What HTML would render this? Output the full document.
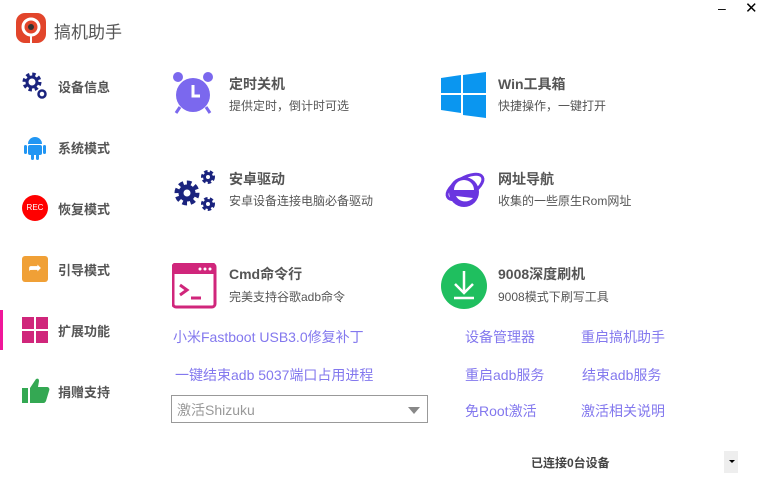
<!DOCTYPE html><html><head><meta charset="utf-8"><style>
body{margin:0;width:766px;height:492px;background:#fff;font-family:"Liberation Sans","Noto Sans CJK SC",sans-serif;position:relative;overflow:hidden;color:#555}
.a{position:absolute;white-space:nowrap}
.nav{font-size:13px;font-weight:bold;color:#555}
.t{font-size:14px;font-weight:bold;color:#555}
.s{font-size:12px;color:#555}
.l{font-size:14px;color:#8378ee}
</style></head><body>
<!-- logo -->
<svg class="a" style="left:16px;top:13px" width="30" height="30" viewBox="0 0 30 30"><rect width="30" height="30" rx="9" fill="#e2452b"/><circle cx="15" cy="14" r="8" fill="none" stroke="#fff" stroke-width="3"/><circle cx="15" cy="14" r="3" fill="#333"/><rect x="14" y="21" width="2" height="9" fill="#fff"/></svg>
<div class="a" style="left:54px;top:18px;font-size:17px;color:#555">搞机助手</div>
<div class="a" style="left:718px;top:0px;font-size:14px;color:#000">–</div>
<div class="a" style="left:745px;top:-1px;font-size:15px;color:#000">✕</div>
<!-- sidebar -->
<svg class="a" style="left:22px;top:72px" width="26" height="28" viewBox="0 0 26 28"><circle cx="10" cy="10" r="7" fill="none" stroke="#1a237e" stroke-width="5" stroke-dasharray="3 2.5"/><circle cx="10" cy="10" r="5" fill="none" stroke="#1a237e" stroke-width="3"/><circle cx="20" cy="22" r="3.5" fill="none" stroke="#1a237e" stroke-width="2.5"/></svg>
<div class="a nav" style="left:58px;top:77px">设备信息</div>
<svg class="a" style="left:22px;top:134px" width="26" height="26" viewBox="0 0 26 26"><path d="M6 10a7 7 0 0 1 14 0z" fill="#2196f3"/><rect x="6" y="11" width="14" height="10" rx="2" fill="#2196f3"/><rect x="2" y="11" width="3" height="9" rx="1.5" fill="#2196f3"/><rect x="21" y="11" width="3" height="9" rx="1.5" fill="#2196f3"/><rect x="9" y="20" width="3" height="6" rx="1.5" fill="#2196f3"/><rect x="14" y="20" width="3" height="6" rx="1.5" fill="#2196f3"/></svg>
<div class="a nav" style="left:58px;top:138px">系统模式</div>
<div class="a" style="left:22px;top:195px;width:26px;height:26px;border-radius:50%;background:#f00;color:#fff;font-size:8px;line-height:26px;text-align:center">REC</div>
<div class="a nav" style="left:58px;top:199px">恢复模式</div>
<div class="a" style="left:22px;top:256px;width:26px;height:26px;border-radius:3px;background:#f0a036;color:#fff;font-size:16px;line-height:26px;text-align:center">➦</div>
<div class="a nav" style="left:58px;top:260px">引导模式</div>
<div class="a" style="left:0;top:310px;width:3px;height:40px;background:#f0179a"></div>
<svg class="a" style="left:22px;top:317px" width="26" height="26"><rect x="0" y="0" width="12" height="12" fill="#d0267b"/><rect x="14" y="0" width="12" height="12" fill="#d0267b"/><rect x="0" y="14" width="12" height="12" fill="#d0267b"/><rect x="14" y="14" width="12" height="12" fill="#d0267b"/></svg>
<div class="a nav" style="left:58px;top:321px">扩展功能</div>
<svg class="a" style="left:22px;top:376px" width="28" height="28" viewBox="0 0 28 28"><rect x="0" y="12" width="6" height="15" fill="#34a853"/><path d="M8 12l6-9c2-1 3 0 3 2l-1 6h9c2 0 3 2 2 4l-3 10c-1 2-2 2-3 2H8z" fill="#34a853"/></svg>
<div class="a nav" style="left:58px;top:382px">捐赠支持</div>
<!-- cards -->
<svg class="a" style="left:172px;top:71px" width="42" height="45" viewBox="0 0 42 45"><circle cx="6" cy="6" r="5" fill="#7b68ee"/><circle cx="36" cy="6" r="5" fill="#7b68ee"/><circle cx="21" cy="24" r="17" fill="#7b68ee"/><path d="M21 14v11h7" stroke="#fff" stroke-width="3" fill="none"/><path d="M8 36l-4 6M34 36l4 6" stroke="#7b68ee" stroke-width="3"/></svg>
<div class="a t" style="left:229px;top:74px">定时关机</div>
<div class="a s" style="left:229px;top:97px">提供定时，倒计时可选</div>
<svg class="a" style="left:441px;top:72px" width="45" height="46" viewBox="0 0 45 46"><path d="M0 6l20-3v18H0zM22 3l23-3v21H22zM0 23h20v18L0 38zM22 23h23v23l-23-3z" fill="#0a96f0"/></svg>
<div class="a t" style="left:498px;top:74px">Win工具箱</div>
<div class="a s" style="left:498px;top:97px">快捷操作，一键打开</div>
<svg class="a" style="left:172px;top:168px" width="46" height="46" viewBox="0 0 46 46"><g fill="none" stroke="#1a237e"><circle cx="15" cy="25" r="9" stroke-width="7" stroke-dasharray="4 3"/><circle cx="15" cy="25" r="6" stroke-width="5"/><circle cx="36" cy="9" r="5" stroke-width="4" stroke-dasharray="3 2"/><circle cx="36" cy="9" r="3.5" stroke-width="3"/><circle cx="36" cy="36" r="5" stroke-width="4" stroke-dasharray="3 2"/><circle cx="36" cy="36" r="3.5" stroke-width="3"/></g></svg>
<div class="a t" style="left:229px;top:169px">安卓驱动</div>
<div class="a s" style="left:229px;top:192px">安卓设备连接电脑必备驱动</div>
<svg class="a" style="left:441px;top:167px" width="46" height="46" viewBox="0 0 46 46"><ellipse cx="24" cy="20" rx="20" ry="9" transform="rotate(-30 24 20)" fill="none" stroke="#6a35e0" stroke-width="3"/><circle cx="23" cy="25" r="15" fill="#6a35e0"/><path d="M13 23h20a10 10 0 0 0-20 0zM15 29a10 9 0 0 0 17 2" fill="#fff"/><rect x="15" y="23" width="16" height="4" fill="#6a35e0"/></svg>
<div class="a t" style="left:498px;top:169px">网址导航</div>
<div class="a s" style="left:498px;top:192px">收集的一些原生Rom网址</div>
<svg class="a" style="left:172px;top:263px" width="45" height="46" viewBox="0 0 45 46"><rect x="1" y="1" width="42" height="43" rx="3" fill="none" stroke="#d0267b" stroke-width="3"/><rect x="1" y="1" width="42" height="10" fill="#d0267b"/><circle cx="28" cy="6" r="1.5" fill="#fff"/><circle cx="33" cy="6" r="1.5" fill="#fff"/><circle cx="38" cy="6" r="1.5" fill="#fff"/><path d="M8 22l7 5-7 5" stroke="#d0267b" stroke-width="3" fill="none"/><path d="M19 35h10" stroke="#d0267b" stroke-width="3"/></svg>
<div class="a t" style="left:229px;top:264px">Cmd命令行</div>
<div class="a s" style="left:229px;top:288px">完美支持谷歌adb命令</div>
<svg class="a" style="left:441px;top:263px" width="46" height="46" viewBox="0 0 46 46"><circle cx="23" cy="23" r="23" fill="#1fbf5f"/><path d="M23 8v22M14 21l9 9 9-9M13 35h20" stroke="#fff" stroke-width="2.5" fill="none"/></svg>
<div class="a t" style="left:498px;top:264px">9008深度刷机</div>
<div class="a s" style="left:498px;top:288px">9008模式下刷写工具</div>
<!-- links -->
<div class="a l" style="left:173px;top:327px">小米Fastboot USB3.0修复补丁</div>
<div class="a l" style="left:175px;top:365px">一键结束adb 5037端口占用进程</div>
<div class="a l" style="left:465px;top:327px">设备管理器</div>
<div class="a l" style="left:581px;top:327px">重启搞机助手</div>
<div class="a l" style="left:465px;top:365px">重启adb服务</div>
<div class="a l" style="left:582px;top:365px">结束adb服务</div>
<div class="a l" style="left:465px;top:401px">免Root激活</div>
<div class="a l" style="left:581px;top:401px">激活相关说明</div>
<div class="a" style="left:171px;top:395px;width:255px;height:26px;border:1px solid #999;"></div>
<div class="a" style="left:177px;top:400px;font-size:14px;color:#999">激活Shizuku</div>
<div class="a" style="left:408px;top:407px;width:0;height:0;border-left:6px solid transparent;border-right:6px solid transparent;border-top:7px solid #888"></div>
<div class="a" style="left:531px;top:454px;font-size:12px;font-weight:bold;color:#444">已连接0台设备</div>
<div class="a" style="left:724px;top:451px;width:14px;height:22px;background:#eee"></div>
<div class="a" style="left:729px;top:460px;width:0;height:0;border-left:3px solid transparent;border-right:3px solid transparent;border-top:3px solid #000"></div>
</body></html>
